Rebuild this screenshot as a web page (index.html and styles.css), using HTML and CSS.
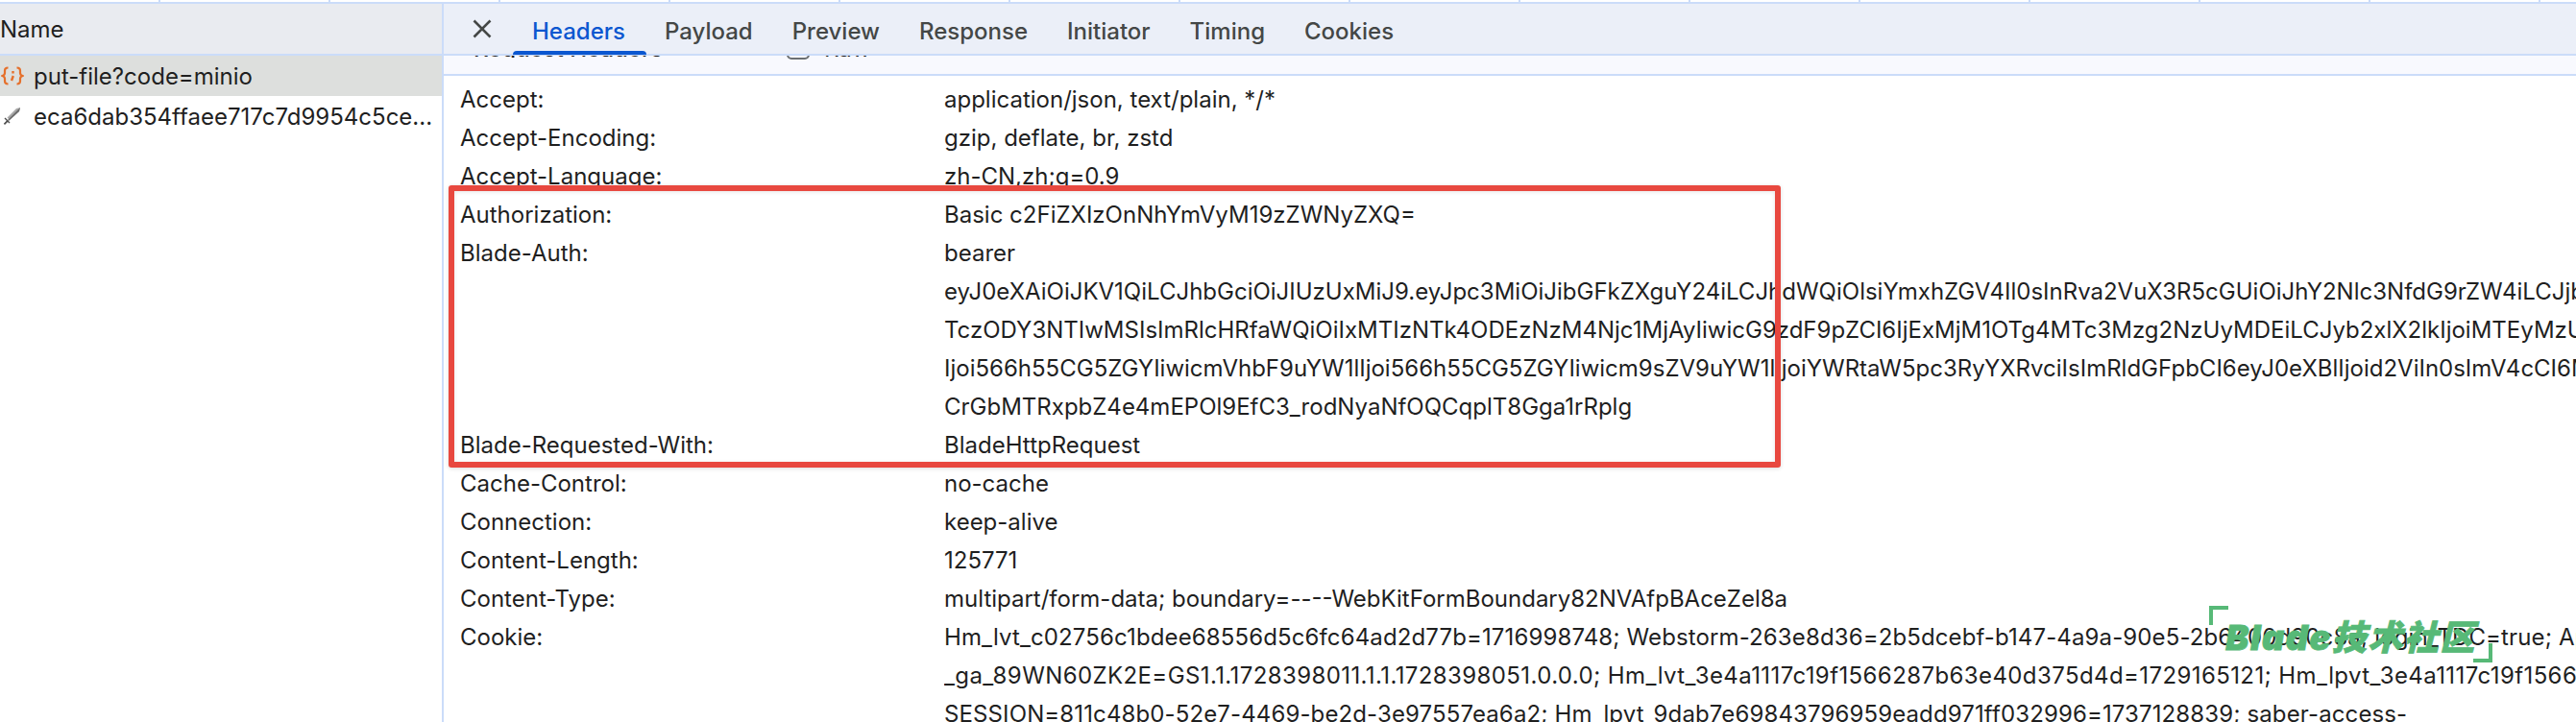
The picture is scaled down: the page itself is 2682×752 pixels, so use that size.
FILE: index.html
```html
<!DOCTYPE html>
<html lang="zh-CN">
<head>
<meta charset="utf-8">
<title>Network request headers</title>
<link rel="stylesheet" href="styles.css">
</head>
<body>
<div class="strip">
  <span class="tick tick-first"></span><span class="tick"></span><span class="tick"></span><span class="tick"></span><span class="tick"></span><span class="tick"></span><span class="tick"></span><span class="tick"></span><span class="tick"></span><span class="tick"></span><span class="tick"></span><span class="tick"></span><span class="tick"></span><span class="tick"></span><span class="tick"></span>
</div>
<div class="panes">
  <aside class="list">
    <div class="list-head">Name</div>
    <div class="req selected">
      <svg class="req-icon" viewBox="0 0 24 20" aria-hidden="true"><path d="M7.500 1.500C5 1.500 4 2.600 4 4.500V7c0 1.400-.9 2.400-2.500 3C3.100 10.600 4 11.600 4 13v2.500c0 1.900 1 3 3.500 3M16.500 1.500c2.500 0 3.500 1.100 3.500 3V7c0 1.400.9 2.400 2.500 3-1.600.6-2.500 1.600-2.500 3v2.500c0 1.900-1 3-3.500 3" fill="none" stroke="#e5702c" stroke-width="2.200"/><path d="M12.500 5v2.400M12.800 10l-1.800 5" fill="none" stroke="#e5702c" stroke-width="2.400"/></svg>
      <span class="req-name">put-file?code=minio</span>
    </div>
    <div class="req">
      <svg class="req-icon" viewBox="0 0 24 20" aria-hidden="true"><path d="M20 1l-1 4L9 14l-2.500-2.500L16 2z" fill="#a9a9a9"/><path d="M20 1l-1 4L8 15l-1-1z" fill="#6d6d6d"/><path d="M4.500 11.500l5 5-1 1-1.500-1.500L4 19l-1.200-1.200 3-3-2.300-2.300z" fill="#4d4d4d"/></svg>
      <span class="req-name">eca6dab354ffaee717c7d9954c5ce...</span>
    </div>
  </aside>
  <main class="detail">
    <nav class="tabs">
      <svg class="close" viewBox="0 0 20 20" aria-hidden="true"><path d="M1.500 1.500l17 17M18.500 1.500l-17 17" fill="none" stroke="#444746" stroke-width="2.600"/></svg>
      <span class="tab active">Headers</span>
      <span class="tab">Payload</span>
      <span class="tab">Preview</span>
      <span class="tab">Response</span>
      <span class="tab">Initiator</span>
      <span class="tab">Timing</span>
      <span class="tab">Cookies</span>
    </nav>
    <div class="section-head">
      <span class="section-title">Request Headers</span>
      <span class="check"></span>
      <span class="raw">Raw</span>
    </div>
    <div class="rows">
      <div class="row"><span class="key">Accept:</span><span class="val">application/json, text/plain, */*</span></div>
      <div class="row"><span class="key">Accept-Encoding:</span><span class="val">gzip, deflate, br, zstd</span></div>
      <div class="row"><span class="key">Accept-Language:</span><span class="val">zh-CN,zh;q=0.9</span></div>
      <div class="row"><span class="key">Authorization:</span><span class="val">Basic c2FiZXIzOnNhYmVyM19zZWNyZXQ=</span></div>
      <div class="row"><span class="key">Blade-Auth:</span><span class="val">bearer</span></div>
      <div class="row"><span class="key"></span><span class="val">eyJ0eXAiOiJKV1QiLCJhbGciOiJIUzUxMiJ9.eyJpc3MiOiJibGFkZXguY24iLCJhdWQiOlsiYmxhZGV4Il0sInRva2VuX3R5cGUiOiJhY2Nlc3NfdG9rZW4iLCJjbGllbnRfaWQiOiJzYWJlcjMiLCJ0ZW5hbnRfaWQiOiIwMDAwMDAiLCJ1c2VyX2lkIjoiMTEyMzU5</span></div>
      <div class="row"><span class="key"></span><span class="val">TczODY3NTIwMSIsImRlcHRfaWQiOiIxMTIzNTk4ODEzNzM4Njc1MjAyIiwicG9zdF9pZCI6IjExMjM1OTg4MTc3Mzg2NzUyMDEiLCJyb2xlX2lkIjoiMTEyMzU5ODgxNjczODY3NTIwMSIsIm9hdXRoX2lkIjoiIiwiYWNjb3VudCI6ImFkbWlu</span></div>
      <div class="row"><span class="key"></span><span class="val">Ijoi566h55CG5ZGYIiwicmVhbF9uYW1lIjoi566h55CG5ZGYIiwicm9sZV9uYW1lIjoiYWRtaW5pc3RyYXRvciIsImRldGFpbCI6eyJ0eXBlIjoid2ViIn0sImV4cCI6MTczNzEzMjQzOSwibmJmIjoxNzM3MTI4ODM5fQ</span></div>
      <div class="row"><span class="key"></span><span class="val">CrGbMTRxpbZ4e4mEPOl9EfC3_rodNyaNfOQCqplT8Gga1rRplg</span></div>
      <div class="row"><span class="key">Blade-Requested-With:</span><span class="val">BladeHttpRequest</span></div>
      <div class="row"><span class="key">Cache-Control:</span><span class="val">no-cache</span></div>
      <div class="row"><span class="key">Connection:</span><span class="val">keep-alive</span></div>
      <div class="row"><span class="key">Content-Length:</span><span class="val">125771</span></div>
      <div class="row"><span class="key">Content-Type:</span><span class="val">multipart/form-data; boundary=----WebKitFormBoundary82NVAfpBAceZel8a</span></div>
      <div class="row"><span class="key">Cookie:</span><span class="val track-s">Hm_lvt_c02756c1bdee68556d5c6fc64ad2d77b=1716998748; Webstorm-263e8d36=2b5dcebf-b147-4a9a-90e5-2b6400d90c8a; login_TDC=true; Apple_ID=1716998748</span></div>
      <div class="row"><span class="key"></span><span class="val track-m">_ga_89WN60ZK2E=GS1.1.1728398011.1.1.1728398051.0.0.0; Hm_lvt_3e4a1117c19f1566287b63e40d375d4d=1729165121; Hm_lpvt_3e4a1117c19f1566287b63e40d375d4d=1729165121</span></div>
      <div class="row"><span class="key"></span><span class="val track-s">SESSION=811c48b0-52e7-4469-be2d-3e97557ea6a2; Hm_lpvt_9dab7e69843796959eadd971ff032996=1737128839; saber-access-</span></div>
    </div>
  </main>
</div>
<div class="redbox"></div>
<div class="mark"><span class="mark-text">Blade技术社区</span></div>
</body>
</html>
```
FILE: styles.css
```css
* { box-sizing: border-box; }
html, body { height: 100%; }
body {
  margin: 0;
  height: 752px;
  overflow: hidden;
  background: #fff;
  color: #1f1f1f;
  font-family: Inter, "Noto Sans CJK SC", sans-serif;
  font-size: 24px;
  position: relative;
}
.strip {
  display: flex;
  height: 4px;
  background: #fff;
  border-bottom: 2px solid #cbdcf9;
  overflow: hidden;
}
.tick {
  flex: 0 0 177px;
  border-right: 2px solid #cbdcf9;
}
.tick-first { flex-basis: 167px; }
.panes { display: flex; height: 748px; }
.list {
  flex: 0 0 462px;
  border-right: 2px solid #cbdcf9;
}
.list-head {
  height: 54px;
  background: #e9ebf0;
  border-bottom: 2px solid #cbdcf9;
  display: flex;
  align-items: center;
}
.req {
  height: 42px;
  display: flex;
  align-items: center;
  gap: 10px;
  padding-left: 1px;
  white-space: nowrap;
}
.req.selected { background: #dddfdd; }
.req-icon { width: 24px; height: 20px; flex: none; }
.detail { flex: 1; min-width: 0; overflow: hidden; }
.tabs {
  height: 54px;
  background: #ebeff8;
  border-bottom: 2px solid #cbdcf9;
  display: flex;
  align-items: center;
  padding: 6px 0 0 30px;
  gap: 41px;
}
.close { width: 20px; height: 20px; flex: none; margin: -6px 1px 0 0; }
.tab {
  color: #444746;
  font-weight: 500;
  line-height: 28px;
  position: relative;
  white-space: nowrap;
}
.tab.active { color: #0b57d0; }
.tab.active::after {
  content: "";
  position: absolute;
  left: -20px;
  right: -22px;
  bottom: -10px;
  height: 4px;
  background: #0b57d0;
  border-radius: 4px 4px 0 0;
}
.section-head {
  height: 21px;
  background: #f8f9fe;
  border-bottom: 2px solid #cbdcf9;
  display: flex;
  align-items: flex-start;
  overflow: hidden;
  padding-left: 31px;
  font-weight: 500;
  white-space: nowrap;
}
.section-title, .raw {
  height: 22px;
  margin-top: -20px;
  line-height: 26px;
  overflow: hidden;
}
.section-title { width: 326px; flex: none; }
.check {
  width: 24px;
  height: 24px;
  margin-top: -20px;
  flex: none;
  border: 2px solid #6b6f72;
  border-radius: 5px;
}
.raw { margin-left: 15px; font-weight: 400; }
.rows { padding-top: 5px; }
.row {
  display: grid;
  grid-template-columns: 504px 1fr;
  height: 40px;
  line-height: 40px;
  padding-left: 17px;
  white-space: nowrap;
}
.key, .val { overflow: hidden; }
.track-s { letter-spacing: .12px; }
.track-m { letter-spacing: .4px; }
.redbox {
  position: absolute;
  left: 467px;
  top: 193px;
  width: 1387px;
  height: 294px;
  border: 6px solid #e8483f;
  border-radius: 3px;
  box-shadow: 0 1px 4px rgba(0, 0, 0, .15), inset 0 1px 4px rgba(0, 0, 0, .1);
}
.mark {
  position: absolute;
  left: 2300px;
  top: 631px;
  width: 295px;
  height: 59px;
  display: flex;
  align-items: center;
  justify-content: center;
  color: #57b977;
}
.mark::before, .mark::after {
  content: "";
  position: absolute;
  width: 16px;
  height: 16px;
  border: 0 solid #57b977;
}
.mark::before { left: 0; top: 0; border-width: 4px 0 0 4px; }
.mark::after { right: 0; bottom: 0; border-width: 0 4px 4px 0; }
.mark-text {
  font: italic 900 36px Inter, "Noto Sans CJK SC", sans-serif;
  letter-spacing: 1.5px;
  -webkit-text-stroke: .8px #57b977;
  white-space: nowrap;
}
```
